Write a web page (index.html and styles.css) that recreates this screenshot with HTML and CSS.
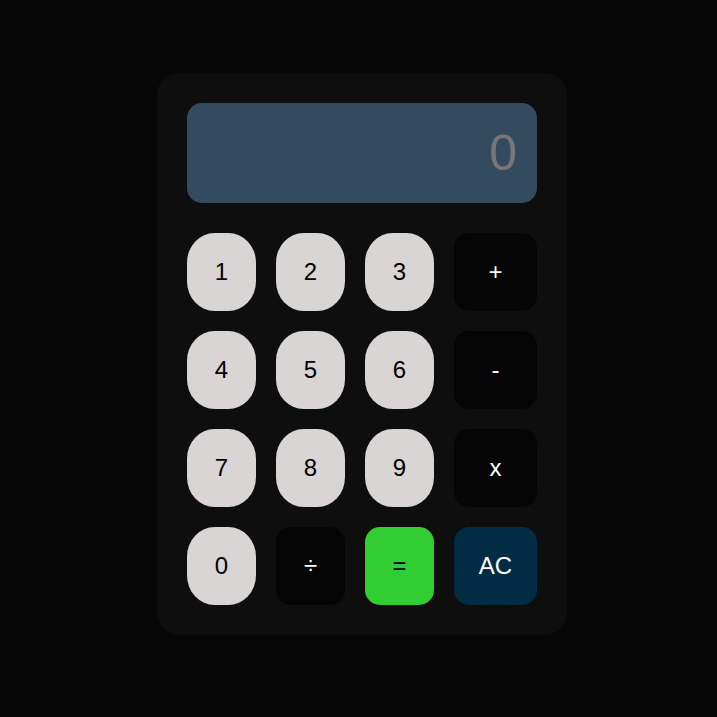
FILE: index.html
```html
<!DOCTYPE html>
<html>
<head>
<meta charset="utf-8">
<link rel="stylesheet" href="styles.css">
</head>
<body>
<div class="calc">
  <div class="display">0</div>
  <div class="keys">
    <button class="key num">1</button>
    <button class="key num">2</button>
    <button class="key num">3</button>
    <button class="key op">+</button>
    <button class="key num">4</button>
    <button class="key num">5</button>
    <button class="key num">6</button>
    <button class="key op">-</button>
    <button class="key num">7</button>
    <button class="key num">8</button>
    <button class="key num">9</button>
    <button class="key op">x</button>
    <button class="key num">0</button>
    <button class="key op">÷</button>
    <button class="key eq">=</button>
    <button class="key ac">AC</button>
  </div>
</div>
</body>
</html>
```
FILE: styles.css
```css
html, body {
  margin: 0;
  padding: 0;
  background: #070707;
  height: 100%;
}
body {
  display: flex;
  justify-content: center;
  align-items: flex-start;
  font-family: "Liberation Sans", Arial, sans-serif;
}
.calc {
  margin-top: 73px;
  margin-left: 7px;
  width: 350px;
  padding: 30px;
  background: #0e0e0e;
  border-radius: 22px;
}
.display {
  height: 100px;
  background: #344a5e;
  border-radius: 15px;
  color: #777777;
  font-size: 50px;
  line-height: 100px;
  text-align: right;
  padding-right: 20px;
  box-sizing: border-box;
}
.keys {
  margin-top: 30px;
  display: grid;
  grid-template-columns: 69px 69px 69px 83px;
  grid-auto-rows: 78px;
  gap: 20px;
}
.key {
  border: none;
  margin: 0;
  padding: 0;
  font-family: "Liberation Sans", Arial, sans-serif;
  font-size: 24px;
  border-radius: 15px;
}
.num {
  background: #d8d5d4;
  color: #000;
  border-radius: 40% / 38%;
}
.op {
  background: #050505;
  color: #fff;
}
.eq {
  background: #32cd32;
  color: #000;
}
.ac {
  background: #022b44;
  color: #fff;
}
```
